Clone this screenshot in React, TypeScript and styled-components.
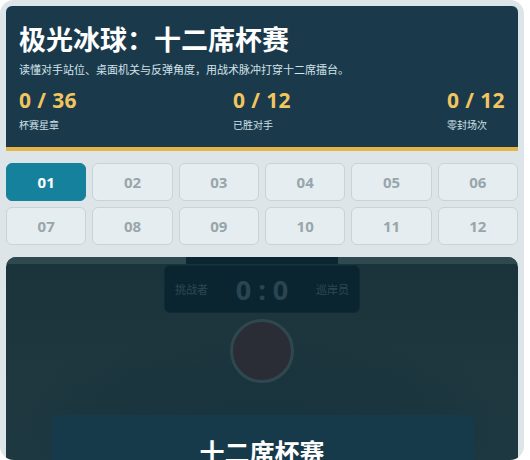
import React from 'react';
import styled, { createGlobalStyle } from 'styled-components';

const GlobalStyle = createGlobalStyle`
  html, body {
    margin: 0;
    padding: 0;
    background: #ffffff;
  }
  body {
    font-family: "Open Sans", "Noto Sans CJK SC", sans-serif;
  }
`;

const Shell = styled.div`
  box-sizing: border-box;
  width: 524px;
  height: 460px;
  overflow: hidden;
  border-radius: 14px;
  background: #dde5e8;
  padding: 6px;
  display: flex;
  flex-direction: column;
  gap: 12px;
`;

const Header = styled.header`
  background: #1a3a4c;
  border-radius: 6px 6px 0 0;
  border-bottom: 4px solid #e5b54c;
  padding: 15px 13px 15px;
  color: #ffffff;
`;

const Title = styled.h1`
  margin: 0 0 4px;
  font-family: "Noto Sans CJK SC", sans-serif;
  font-size: 27px;
  font-weight: 700;
  line-height: 36px;
`;

const Subtitle = styled.p`
  margin: 0 0 10px;
  font-family: "Noto Sans CJK SC", sans-serif;
  font-size: 11px;
  line-height: 16px;
  color: #d3e2ea;
`;

const Stats = styled.div`
  display: flex;
  justify-content: space-between;
`;

const Stat = styled.div`
  display: flex;
  flex-direction: column;
  gap: 5px;
`;

const StatValue = styled.span`
  font-size: 21px;
  font-weight: 700;
  line-height: 26px;
  letter-spacing: 0.4px;
  color: #f2c55e;
`;

const StatLabel = styled.span`
  font-family: "Noto Sans CJK SC", sans-serif;
  font-size: 10px;
  line-height: 14px;
  color: #cfe0e8;
`;

const LevelGrid = styled.div`
  display: grid;
  grid-template-columns: repeat(6, 1fr);
  gap: 6px;
`;

const LevelButton = styled.button<{ $active?: boolean }>`
  height: 38px;
  border-radius: 6px;
  border: 1px solid ${({ $active }) => ($active ? '#16819c' : '#c8d3d7')};
  background: ${({ $active }) => ($active ? '#16819c' : '#e6edf0')};
  color: ${({ $active }) => ($active ? '#ffffff' : '#98a6ab')};
  font-family: "Open Sans", sans-serif;
  font-size: 15px;
  font-weight: 700;
  padding: 0;
  cursor: pointer;
`;

const Arena = styled.section`
  position: relative;
  flex-shrink: 0;
  height: 380px;
  border-radius: 10px;
  overflow: hidden;
  background:
    radial-gradient(ellipse 75% 55% at 50% 75%, rgba(30, 58, 68, 0) 50%, rgba(44, 64, 70, 0.45) 100%),
    linear-gradient(180deg, #0c2731 0%, #13303a 30%, #1a3640 55%, #1d3942 100%);
  display: flex;
  flex-direction: column;
  align-items: center;
`;

const Rail = styled.div`
  align-self: stretch;
  height: 7px;
  display: flex;
  justify-content: center;
  background: #2e4950;
`;

const Goal = styled.div`
  width: 152px;
  background: #0c2732;
`;

const Scoreboard = styled.div`
  box-sizing: border-box;
  width: 196px;
  height: 48px;
  margin-top: 1px;
  border-radius: 6px;
  background: #0a2530;
  border: 1px solid #0f2c36;
  display: flex;
  align-items: center;
  justify-content: space-between;
  padding: 0 10px;
`;

const Side = styled.span`
  font-family: "Noto Sans CJK SC", sans-serif;
  font-size: 11px;
  color: #2d4952;
`;

const Score = styled.span`
  font-size: 27px;
  font-weight: 700;
  color: #2a4550;
`;

const Puck = styled.div`
  box-sizing: border-box;
  width: 64px;
  height: 64px;
  margin-top: 6px;
  border-radius: 50%;
  background: #2a2d36;
  border: 3px solid #2f4850;
`;

const Card = styled.div`
  box-sizing: border-box;
  width: 423px;
  margin-top: 32px;
  padding-top: 18px;
  height: 160px;
  border-radius: 8px;
  background: #173a4b;
  text-align: center;
`;

const CardTitle = styled.h2`
  margin: 0;
  font-family: "Noto Sans CJK SC", sans-serif;
  font-size: 25px;
  font-weight: 700;
  color: #ffffff;
`;

const stats = [
  { value: '0 / 36', label: '杯赛星章' },
  { value: '0 / 12', label: '已胜对手' },
  { value: '0 / 12', label: '零封场次' },
];

const levels = Array.from({ length: 12 }, (_, i) => String(i + 1).padStart(2, '0'));

export default function App() {
  return (
    <>
      <GlobalStyle />
      <Shell>
        <Header>
          <Title>极光冰球：十二席杯赛</Title>
          <Subtitle>读懂对手站位、桌面机关与反弹角度，用战术脉冲打穿十二席擂台。</Subtitle>
          <Stats>
            {stats.map((s) => (
              <Stat key={s.label}>
                <StatValue>{s.value}</StatValue>
                <StatLabel>{s.label}</StatLabel>
              </Stat>
            ))}
          </Stats>
        </Header>
        <LevelGrid>
          {levels.map((n, i) => (
            <LevelButton key={n} $active={i === 0}>{n}</LevelButton>
          ))}
        </LevelGrid>
        <Arena>
          <Rail>
            <Goal />
          </Rail>
          <Scoreboard>
            <Side>挑战者</Side>
            <Score>0 : 0</Score>
            <Side>巡岸员</Side>
          </Scoreboard>
          <Puck />
          <Card>
            <CardTitle>十二席杯赛</CardTitle>
          </Card>
        </Arena>
      </Shell>
    </>
  );
}
